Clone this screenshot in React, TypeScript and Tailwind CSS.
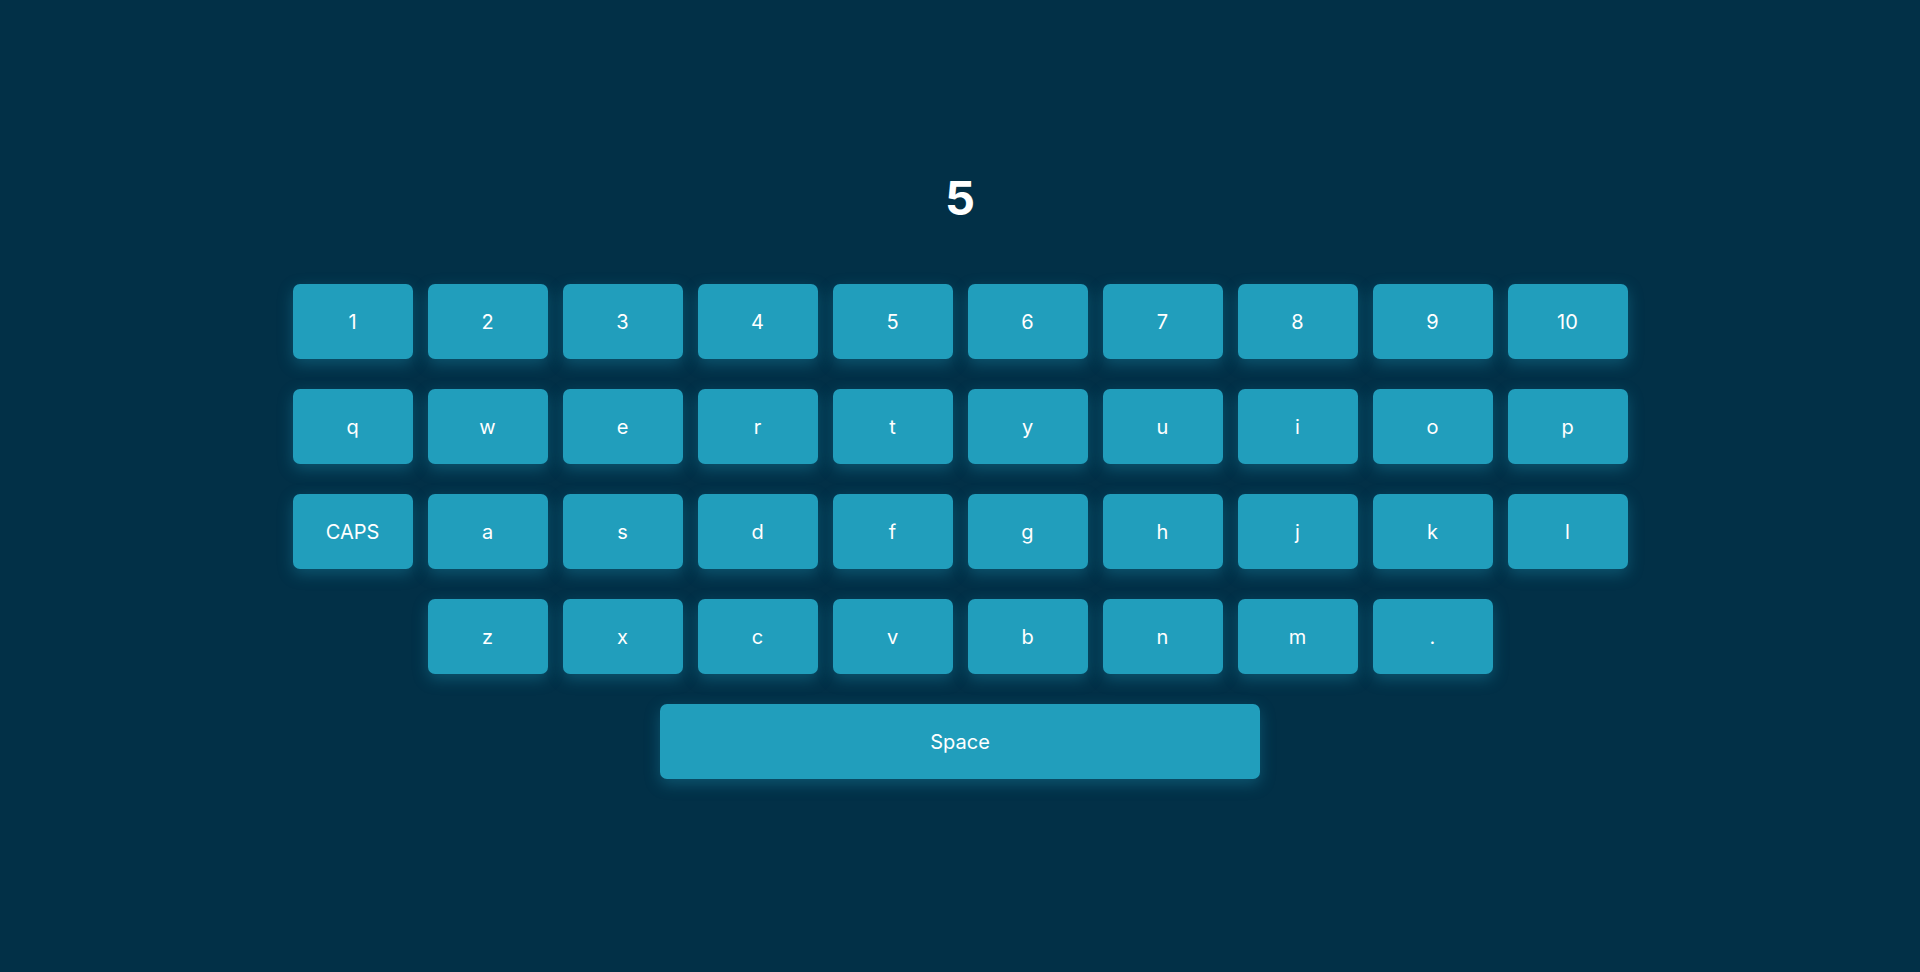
import React from "react";

const rows: string[][] = [
  ["1", "2", "3", "4", "5", "6", "7", "8", "9", "10"],
  ["q", "w", "e", "r", "t", "y", "u", "i", "o", "p"],
  ["CAPS", "a", "s", "d", "f", "g", "h", "j", "k", "l"],
  ["z", "x", "c", "v", "b", "n", "m", "."],
];

function Key({ label, wide }: { label: string; wide?: boolean }) {
  return (
    <button
      className={`${wide ? "w-[600px]" : "w-[120px]"} h-[75px] rounded-[7px] bg-[#219ebc] text-white text-[20px] font-normal flex items-center justify-center shadow-[0_5px_15px_rgba(33,158,188,0.35)]`}
    >
      {label}
    </button>
  );
}

export default function App() {
  return (
    <div
      className="min-h-[972px] w-full bg-[#023047] flex flex-col items-center pt-[162px]"
      style={{ fontFamily: "Inter, 'Noto Sans', sans-serif" }}
    >
      <h1 className="text-[47px] leading-[72px] font-bold text-white">5</h1>
      <div className="mt-[50px] flex flex-col items-center gap-[30px]">
        {rows.map((row, i) => (
          <div key={i} className="flex gap-[15px]">
            {row.map((k) => (
              <Key key={k} label={k} />
            ))}
          </div>
        ))}
        <Key label="Space" wide />
      </div>
    </div>
  );
}
